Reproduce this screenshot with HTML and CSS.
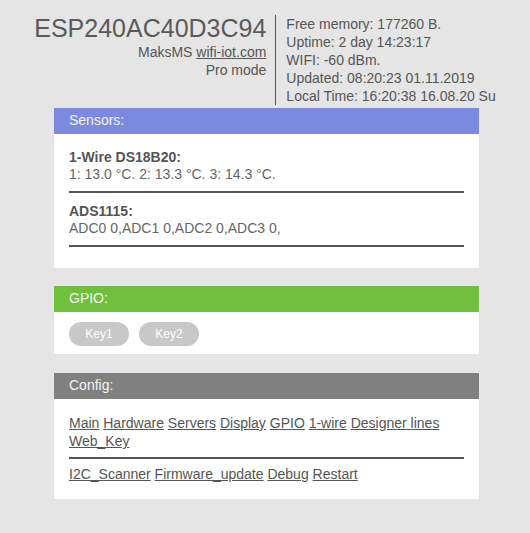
FILE: index.html
```html
<!DOCTYPE html>
<html>
<head>
<meta charset="utf-8">
<title>ESP240AC40D3C94</title>
<link rel="stylesheet" href="styles.css">
</head>
<body>
<header class="top">
  <div class="ident">
    <div class="title">ESP240AC40D3C94</div>
    <div class="sub">MaksMS <a href="#">wifi-iot.com</a></div>
    <div class="sub">Pro mode</div>
  </div>
  <div class="stats">
    <div>Free memory: 177260 B.</div>
    <div>Uptime: 2 day 14:23:17</div>
    <div>WIFI: -60 dBm.</div>
    <div>Updated: 08:20:23 01.11.2019</div>
    <div>Local Time: 16:20:38 16.08.20 Su</div>
  </div>
</header>

<section class="panel">
  <div class="panel-head head-blue">Sensors:</div>
  <div class="panel-body sensors">
    <div class="s-title">1-Wire DS18B20:</div>
    <div class="s-value">1: 13.0 °C. 2: 13.3 °C. 3: 14.3 °C.</div>
    <hr class="rule">
    <div class="s-title">ADS1115:</div>
    <div class="s-value">ADC0 0,ADC1 0,ADC2 0,ADC3 0,</div>
    <hr class="rule">
  </div>
</section>

<section class="panel panel-gpio">
  <div class="panel-head head-green">GPIO:</div>
  <div class="panel-body gpio">
    <button class="key">Key1</button>
    <button class="key">Key2</button>
  </div>
</section>

<section class="panel">
  <div class="panel-head head-gray">Config:</div>
  <div class="panel-body config">
    <div class="links">
      <a href="#">Main</a> <a href="#">Hardware</a> <a href="#">Servers</a> <a href="#">Display</a> <a href="#">GPIO</a> <a href="#">1-wire</a> <a href="#">Designer lines</a> <a href="#">Web_Key</a>
    </div>
    <hr class="rule cfg-rule">
    <div class="links">
      <a href="#">I2C_Scanner</a> <a href="#">Firmware_update</a> <a href="#">Debug</a> <a href="#">Restart</a>
    </div>
  </div>
</section>
</body>
</html>
```

FILE: styles.css
```css
html, body {
  margin: 0;
  padding: 0;
}
body {
  background: #e5e5e5;
  font-family: "Liberation Sans", Arial, sans-serif;
  font-size: 14px;
  color: #555;
}
a {
  color: #555;
  text-decoration: underline;
}

.top {
  display: flex;
  justify-content: center;
  align-items: flex-start;
  padding-top: 14px;
  margin-bottom: 3px;
}
.ident {
  text-align: right;
  padding-right: 9px;
}
.title {
  font-size: 25px;
  line-height: 29px;
  color: #5a5a5a;
}
.sub {
  line-height: 18px;
}
.stats {
  margin-top: 1px;
  border-left: 1px solid #555;
  padding-left: 10px;
  line-height: 18px;
}

.panel {
  width: 425px;
  margin: 0 0 18px calc(50% - 211px);
  background: #fff;
}
.panel-gpio {
  margin-bottom: 19px;
}
.panel-head {
  height: 26px;
  line-height: 25px;
  padding-left: 15px;
  color: #f4f4f4;
}
.head-blue { background: #7b8ae0; }
.head-green { background: #70c040; }
.head-gray { background: #808080; }

.panel-body {
  padding: 0 15px;
}
.rule {
  border: 0;
  height: 2px;
  background: #555;
}

.sensors {
  padding-top: 15px;
  padding-bottom: 11px;
}
.s-title {
  font-weight: bold;
  line-height: 17px;
}
.s-value {
  line-height: 17px;
  color: #666;
}
.sensors .rule {
  margin: 8px 0 10px;
}

.gpio {
  display: flex;
  gap: 10px;
  padding-top: 10px;
  padding-bottom: 8px;
}
.key {
  width: 60px;
  height: 24px;
  border: 0;
  border-radius: 12px;
  background: #c8c8c8;
  color: #fff;
  font-family: "Liberation Sans", Arial, sans-serif;
  font-size: 12px;
  padding: 0;
}

.config {
  padding-top: 15px;
  padding-bottom: 16px;
}
.links {
  line-height: 18px;
}
.cfg-rule {
  margin: 7px 0 6px;
}
```
